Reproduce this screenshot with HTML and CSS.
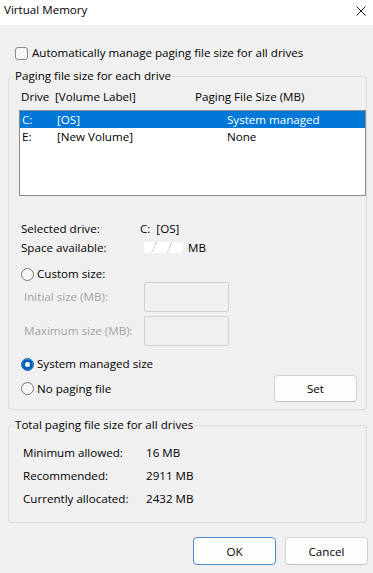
FILE: index.html
```html
<!DOCTYPE html>
<html>
  <head>
    <meta charset="utf-8">
    <title>Virtual Memory</title>
    <link rel="stylesheet" href="styles.css">
  </head>
  <body>
    <div class="titlebar">
      <span class="title">Virtual Memory</span>
      <svg class="close" width="10" height="10" viewBox="0 0 10 10">
        <path d="M0.5 0.5L9.5 9.5M9.5 0.5L0.5 9.5" stroke="#1a1a1a" stroke-width="1" fill="none"/>
      </svg>
    </div>

    <div class="content">
      <div class="check-row"><span class="checkbox"></span>Automatically manage paging file size for all drives</div>

      <fieldset class="group drives">
        <legend>Paging file size for each drive</legend>
        <div class="list-head"><span>Drive</span><span>[Volume Label]</span><span>Paging File Size (MB)</span></div>
        <div class="list">
          <div class="list-row selected"><span>C:</span><span>[OS]</span><span>System managed</span></div>
          <div class="list-row"><span>E:</span><span>[New Volume]</span><span>None</span></div>
        </div>

        <div class="info first"><span>Selected drive:</span><span>C:&nbsp; [OS]</span></div>
        <div class="info"><span>Space available:</span><span><span class="redacted"></span>MB</span></div>

        <div class="radio-row custom"><span class="radio"></span>Custom size:</div>
        <div class="size-row"><span class="size-label">Initial size (MB):</span><span class="edit"></span></div>
        <div class="size-row second"><span class="size-label">Maximum size (MB):</span><span class="edit"></span></div>

        <div class="radio-row managed"><span class="radio checked"></span>System managed size</div>
        <div class="set-row">
          <div class="radio-row"><span class="radio"></span>No paging file</div>
          <button class="btn set">Set</button>
        </div>
      </fieldset>

      <fieldset class="group totals">
        <legend>Total paging file size for all drives</legend>
        <div class="total first"><span>Minimum allowed:</span><span>16 MB</span></div>
        <div class="total"><span>Recommended:</span><span>2911 MB</span></div>
        <div class="total"><span>Currently allocated:</span><span>2432 MB</span></div>
      </fieldset>

      <div class="actions">
        <button class="btn ok">OK</button>
        <button class="btn">Cancel</button>
      </div>
    </div>
  </body>
</html>
```

FILE: styles.css
```css
body {
  margin: 0;
  background-color: #f0f0f0;
  color: #000;
  font-family: "Open Sans", "Noto Sans", sans-serif;
  font-size: 11.6px;
  line-height: 16px;
}

.titlebar {
  height: 25px;
  background-color: #fff;
  display: flex;
  justify-content: space-between;
  align-items: flex-start;
  padding: 2px 7px 0 4px;
  box-sizing: border-box;
}

.close {
  margin-top: 4px;
}

.content {
  padding: 0 6px 0 8px;
}

.check-row {
  margin-top: 20px;
  height: 16px;
  padding-left: 7px;
  display: flex;
  align-items: center;
  gap: 4px;
}

.checkbox {
  width: 13px;
  height: 13px;
  box-sizing: border-box;
  border: 1px solid #8a8a8a;
  border-radius: 3px;
  background-color: #f7f7f7;
}

.group {
  margin: 7px 0 0;
  padding: 0;
  min-width: 0;
  border: 1px solid #dcdcdc;
  border-radius: 3px;
}

.group legend {
  margin-left: 5px;
  padding: 0 1px;
  line-height: 16px;
}

.drives {
  padding-bottom: 7px;
}

.list-head {
  margin-top: 5px;
  padding-left: 12px;
  display: grid;
  grid-template-columns: 34px 140px auto;
}

.list {
  margin: 5px 0 0 10px;
  height: 86px;
  box-sizing: border-box;
  border: 1px solid #8c8c8c;
  background-color: #fff;
}

.list-row {
  height: 17px;
  line-height: 17px;
  padding-left: 2px;
  display: grid;
  grid-template-columns: 35px 170px auto;
}

.list-row.selected {
  background-color: #0078d7;
  color: #fff;
}

.info {
  padding-left: 12px;
  line-height: 19px;
  display: grid;
  grid-template-columns: 119px auto;
}

.info.first {
  margin-top: 23px;
}

.redacted {
  display: inline-block;
  width: 39px;
  height: 11px;
  margin: 0 5px 0 4px;
  vertical-align: -1px;
  background: repeating-linear-gradient(115deg, #fff 0 11px, #cdd6e8 11px 12px, #fff 12px 14px);
}

.radio-row {
  height: 16px;
  display: flex;
  align-items: center;
  gap: 3px;
}

.drives > .radio-row {
  padding-left: 12px;
}

.custom {
  margin-top: 9px;
}

.managed {
  margin-top: 10px;
}

.radio {
  width: 13px;
  height: 13px;
  box-sizing: border-box;
  border: 1px solid #7a7a7a;
  border-radius: 50%;
  background-color: #f5f5f5;
}

.radio.checked {
  border-color: #005fb8;
  background-color: #fff;
  box-shadow: inset 0 0 0 3px #005fb8;
}

.size-row {
  padding-left: 15px;
  display: flex;
  align-items: center;
}

.size-row.second {
  margin-top: 4px;
}

.size-label {
  width: 120px;
  color: #a3a3a3;
}

.edit {
  width: 85px;
  height: 30px;
  box-sizing: border-box;
  border: 1px solid #d2d2d2;
  border-radius: 2px;
}

.set-row {
  margin-top: 3px;
  padding: 0 9px 0 12px;
  display: flex;
  justify-content: space-between;
  align-items: center;
}

.btn {
  height: 28px;
  width: 83px;
  padding: 0;
  box-sizing: border-box;
  border: 1px solid #d3d3d3;
  border-bottom-color: #c2c2c2;
  border-radius: 4px;
  background-color: #fdfdfd;
  color: #000;
  font-family: inherit;
  font-size: 11.6px;
}

.btn.set {
  height: 27px;
}

.btn.ok {
  border-color: #4a88cf;
}

.totals {
  padding-bottom: 12px;
}

.total {
  padding-left: 14px;
  line-height: 23px;
  display: grid;
  grid-template-columns: 123px auto;
}

.total.first {
  margin-top: 8px;
}

.actions {
  margin: 14px -1px 0 0;
  display: flex;
  justify-content: flex-end;
  gap: 9px;
}
```
